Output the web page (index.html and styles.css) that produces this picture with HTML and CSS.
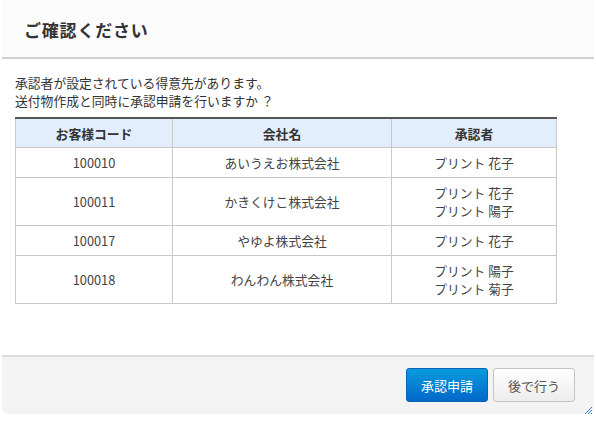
FILE: index.html
```html
<!DOCTYPE html>
<html lang="ja">
<head>
<meta charset="utf-8">
<link rel="stylesheet" href="styles.css">
</head>
<body>
<div class="dialog">
  <div class="header"><h1 class="title">ご確認ください</h1></div>
  <div class="content">
    <p class="msg">承認者が設定されている得意先があります。<br>送付物作成と同時に承認申請を行いますか ？</p>
    <table class="grid">
      <colgroup><col class="c1"><col class="c2"><col class="c3"></colgroup>
      <thead>
        <tr><th>お客様コード</th><th>会社名</th><th>承認者</th></tr>
      </thead>
      <tbody>
        <tr class="one"><td>100010</td><td>あいうえお株式会社</td><td>プリント 花子</td></tr>
        <tr class="two"><td>100011</td><td>かきくけこ株式会社</td><td>プリント 花子<br>プリント 陽子</td></tr>
        <tr class="one"><td>100017</td><td>やゆよ株式会社</td><td>プリント 花子</td></tr>
        <tr class="two"><td>100018</td><td>わんわん株式会社</td><td>プリント 陽子<br>プリント 菊子</td></tr>
      </tbody>
    </table>
  </div>
  <div class="footer">
    <button class="btn primary">承認申請</button>
    <button class="btn secondary">後で行う</button>
    <svg class="grip" width="9" height="9" viewBox="0 0 9 9">
      <path d="M8 1 L1 8 M8 4 L4 8 M8 7 L7 8" stroke="#3a78b8" stroke-width="1"/>
    </svg>
  </div>
</div>
</body>
</html>
```

FILE: styles.css
```css
html, body {
  margin: 0;
  padding: 0;
  background: #ffffff;
}
body {
  font-family: "Noto Sans CJK JP", "Noto Sans", sans-serif;
  color: #333333;
  width: 596px;
  height: 422px;
  overflow: hidden;
}
.dialog {
  margin: 0 2px;
  height: 414px;
  display: flex;
  flex-direction: column;
  background: #fdfdfd;
  border-radius: 0 0 6px 6px;
  position: relative;
}
.header {
  border-bottom: 2px solid #d0d0d0;
  display: flex;
  align-items: center;
  padding-left: 22px;
  box-sizing: border-box;
  height: 59px;
  background: #fcfcfc;
}
.title {
  margin: 0;
  font-size: 17px;
  font-weight: bold;
  color: #333;
  letter-spacing: 0.8px;
  padding-top: 2px;
}
.content {
  flex: 1;
  padding: 15px 0 0 13px;
  background: #ffffff;
}
.msg {
  margin: 0 0 7px 0;
  font-size: 12.8px;
  line-height: 18px;
  color: #333;
}
.grid {
  border-collapse: collapse;
  width: 541px;
  font-size: 12.8px;
  color: #444;
  border-top: 2px solid #555;
  table-layout: fixed;
}
.c1 { width: 157px; }
.c2 { width: 219px; }
.c3 { width: 165px; }
.grid th {
  background: #e3eefc;
  height: 28px;
  padding: 0;
  font-weight: bold;
  border: 1px solid #c8c8c8;
  border-top: none;
  color: #333;
}
.grid td {
  border: 1px solid #c8c8c8;
  text-align: center;
  padding: 0;
  line-height: 18px;
}
.num { letter-spacing: 0.4px; }
.one td { height: 29px; }
.two td { height: 47px; }
.footer {
  height: 57px;
  border-top: 2px solid #dcdcdc;
  background: #f3f3f3;
  border-radius: 0 0 6px 6px;
  display: flex;
  justify-content: flex-end;
  align-items: center;
  gap: 5px;
  padding-right: 19px;
  position: relative;
}
.btn {
  height: 34px;
  font-family: "Noto Sans CJK JP", sans-serif;
  font-size: 13px;
  border-radius: 3px;
  padding: 0;
  margin-top: -1px;
}
.primary {
  width: 82px;
  color: #ffffff;
  background: linear-gradient(#0a9be0, #0068c8);
  border: 1px solid #0a62b4;
}
.secondary {
  width: 82px;
  color: #555;
  background: linear-gradient(#ffffff, #ececec);
  border: 1px solid #c4c4c4;
}
.grip {
  position: absolute;
  right: 1px;
  bottom: -1px;
}
```
